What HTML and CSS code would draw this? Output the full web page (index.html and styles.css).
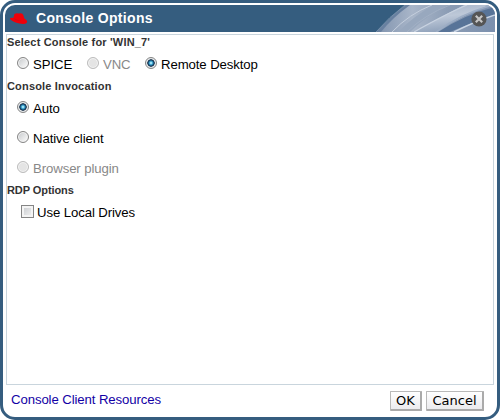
FILE: index.html
```html
<!DOCTYPE html>
<html lang="en">
<head>
<meta charset="utf-8">
<title>Console Options</title>
<link rel="stylesheet" href="styles.css">
</head>
<body>
<div class="dialog">
  <header class="header">
    <svg class="swoosh" width="125" height="27" viewBox="0 0 125 27">
      <defs>
        <linearGradient id="band" x1="0" y1="0" x2="1" y2="0">
          <stop offset="0" stop-color="#8093ae"/>
          <stop offset=".3" stop-color="#a9b6c9"/>
          <stop offset=".6" stop-color="#8c9db5"/>
          <stop offset="1" stop-color="#7b90ae"/>
        </linearGradient>
        <linearGradient id="light" x1="0" y1="0" x2=".35" y2="1">
          <stop offset="0" stop-color="#a2b1c6"/>
          <stop offset=".5" stop-color="#bdc8d8"/>
          <stop offset="1" stop-color="#8fa1ba"/>
        </linearGradient>
      </defs>
      <path d="M7 27Q20 12 36 0H125V27Z" fill="url(#band)"/>
      <path d="M7 27Q20 12 36 0H40Q22 13 11 27Z" fill="#6880a0"/>
      <path d="M6 27Q19 12 35 0" fill="none" stroke="#90a3bc" stroke-width=".7"/>
      <path d="M28 27Q45 10 64 0H78Q56 11 40 27Z" fill="#98a8be"/>
      <path d="M22 27Q39 9 62 0" fill="none" stroke="#c5cfdd" stroke-width="1"/>
      <path d="M37 27Q54 10 80 0" fill="none" stroke="#a5b3c7" stroke-width=".8"/>
      <path d="M43 27Q75 10 94 0H120Q94 9 66 27Z" fill="url(#light)"/>
      <path d="M44 27Q78 8 97 0" fill="none" stroke="#c8d2e0" stroke-width="1.3"/>
      <path d="M68 27Q96 9 125 2V11Q105 16 80 27Z" fill="#587498"/>
      <path d="M66 27Q92 8 123 0" fill="none" stroke="#9cadc5" stroke-width="1.5"/>
      <path d="M84 27Q106 16 125 10" fill="none" stroke="#cad6e5" stroke-width="1.4"/>
    </svg>
    <svg class="hat" width="20" height="14" viewBox="0 0 20 14">
      <path d="M5.4 2Q7.8.5 9.6 1.6Q12 .8 13.4 1.8Q14.8 3.2 15.3 6.6Q18.8 8.5 18 10.4Q16.3 12.9 10.5 11.6Q4 10.2 1 7Q.4 5.6 4.5 5.8Z" fill="#f00009"/>
      <path d="M4.5 6Q7.5 8.5 12.2 8.4Q10 9.2 6.5 8Z" fill="#c90a19"/>
    </svg>
    <h1 class="title">Console Options</h1>
    <svg class="close" width="16" height="16" viewBox="0 0 16 16">
      <circle cx="8" cy="8" r="7.6" fill="#555"/>
      <path d="M4.8 4.8L11.2 11.2M11.2 4.8L4.8 11.2" stroke="#c6c6c6" stroke-width="2.2"/>
    </svg>
  </header>
  <main class="panel">
    <h2 class="group select">Select Console for 'WIN_7'</h2>
    <div class="row protocols">
      <label class="choice spice"><i class="radio"></i><span class="text">SPICE</span></label>
      <label class="choice vnc disabled"><i class="radio"></i><span class="text">VNC</span></label>
      <label class="choice"><i class="radio on"></i><span class="text">Remote Desktop</span></label>
    </div>
    <h2 class="group">Console Invocation</h2>
    <div class="row auto"><label class="choice"><i class="radio on"></i><span class="text">Auto</span></label></div>
    <div class="row native"><label class="choice"><i class="radio"></i><span class="text">Native client</span></label></div>
    <div class="row plugin"><label class="choice disabled"><i class="radio"></i><span class="text">Browser plugin</span></label></div>
    <h2 class="group rdp">RDP Options</h2>
    <div class="row drives"><label class="choice"><i class="check"></i><span class="text">Use Local Drives</span></label></div>
  </main>
  <footer class="footer">
    <a class="link">Console Client Resources</a>
    <button class="button ok">OK</button>
    <button class="button cancel">Cancel</button>
  </footer>
</div>
</body>
</html>
```
FILE: styles.css
```css
* { box-sizing: border-box; }
body { margin: 0; background: #fff; font-family: "Liberation Sans", Arial, sans-serif; }
.dialog { width: 500px; height: 420px; border: 3px solid #355d7f; border-radius: 15px; padding: 2px; background: #fff; display: flex; flex-direction: column; }
.header { position: relative; height: 27px; flex: none; display: flex; align-items: center; background: #355d7f; border-radius: 10px 10px 0 0; overflow: hidden; }
.swoosh { position: absolute; right: 0; top: 0; }
.hat { margin: 0 7px 0 4px; }
.title { margin: 0; color: #fff; font-size: 14px; line-height: 27px; letter-spacing: .33px; }
.close { position: relative; margin-left: auto; margin-right: 8px; }
.panel { height: 351px; flex: none; margin: 2px 1px 0; border: 1px solid #c9d5dd; }
.group { margin: 0; height: 14px; line-height: 14px; font-size: 11px; letter-spacing: .17px; color: #333; white-space: nowrap; }
.select { letter-spacing: .18px; }
.rdp { letter-spacing: -.08px; }
.row { display: flex; height: 30px; padding-left: 10px; }
.choice { display: flex; align-items: center; height: 28px; font-size: 13.2px; line-height: 16px; color: #000; white-space: nowrap; }
.disabled { color: #888; }
.text { padding-top: 3px; letter-spacing: -.1px; }
.radio { width: 12px; height: 12px; margin-right: 4px; border: 1px solid #858585; border-radius: 50%; background: linear-gradient(135deg, #c5c8cb, #f6f6f6 85%); box-shadow: inset 0 0 0 1px #f4f4f4; }
.radio.on { background: radial-gradient(circle at 50% 50%, #a5e6f8 0 .6px, #39a0cc 1.7px, #10395d 3px, #152c45 3.4px, #e6e9eb 4px); box-shadow: none; }
.disabled .radio { border-color: #bcbcbc; background: #e4e4e4; }
.check { width: 13px; height: 13px; margin-right: 3px; border: 1px solid #858585; background: linear-gradient(135deg, #c6c9cd, #f5f5f5); box-shadow: inset 0 0 0 2px #f4f4f4; }
.spice { width: 70px; }
.vnc { width: 58px; }
.drives { padding-left: 14px; }
.footer { display: flex; align-items: flex-start; padding: 6px 11px 0 6px; }
.link { margin-right: auto; padding-top: 1px; color: #1200a5; font-size: 13.2px; line-height: 16px; letter-spacing: -.1px; }
.button { height: 20px; padding: 0; border: 1px solid #b9b9b9; border-right: 2px solid #aaa; border-bottom: 2px solid #aaa; border-radius: 1px; background: linear-gradient(#fff, #ebebee); font: 13px/16px "DejaVu Sans", sans-serif; color: #000; }
.ok { width: 32px; margin-right: 4px; }
.cancel { width: 58px; }
```
